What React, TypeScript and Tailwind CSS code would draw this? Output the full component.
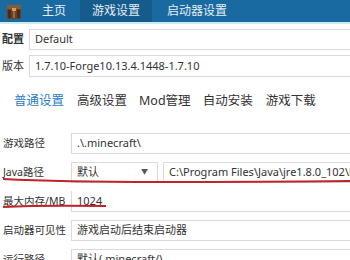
const font = { fontFamily: '"Noto Sans", "Noto Sans CJK SC", sans-serif' };

function BoxIcon() {
  return (
    <svg width="14" height="15" viewBox="0 0 14 15">
      <rect x="0" y="1" width="14" height="14" rx="1" fill="#6b4020" />
      <rect x="0" y="1" width="14" height="4" fill="#8a5a30" />
      <rect x="1" y="6" width="3" height="8" fill="#4a2a14" />
      <rect x="6" y="6" width="2" height="8" fill="#9a6838" />
      <rect x="10" y="6" width="3" height="8" fill="#4a2a14" />
      <rect x="5" y="4" width="4" height="3" fill="#c8a070" />
    </svg>
  );
}

function Field({ children, className = "" }: { children: React.ReactNode; className?: string }) {
  return (
    <div
      className={
        "h-[21px] border border-[#dadada] bg-white flex items-center px-[5px] text-[11px] text-[#333] whitespace-nowrap overflow-hidden " +
        className
      }
    >
      {children}
    </div>
  );
}

function Row({ label, children }: { label: string; children: React.ReactNode }) {
  return (
    <div className="flex items-center h-[21px]">
      <div className="w-[71px] pl-[3px] text-[10.5px] text-[#333] whitespace-nowrap">{label}</div>
      <div className="flex-1 flex gap-[5px] min-w-0">{children}</div>
    </div>
  );
}

export default function App() {
  return (
    <div className="w-[350px] h-[260px] bg-white overflow-hidden relative" style={font}>
      <div className="h-[22px] bg-[#1a6aa2] flex items-center text-[12px] text-[#e4eef6]">
        <div className="w-[28px] flex justify-center pl-[2px] pr-[3px]">
          <BoxIcon />
        </div>
        <div className="w-[52px] h-full flex items-center justify-center">主页</div>
        <div className="w-[72px] h-full flex items-center justify-center bg-[#155b8c]">游戏设置</div>
        <div className="h-full flex items-center pl-[15px]">启动器设置</div>
      </div>
      <div className="h-[2px] bg-[#c6eeee]" />

      <div className="pt-[5px] flex flex-col gap-[5px]">
        <div className="flex items-center">
          <div className="w-[29px] pl-[2px] text-[11px] font-bold text-[#333]">配置</div>
          <Field className="flex-1 border-r-0">Default</Field>
        </div>
        <div className="flex items-center">
          <div className="w-[29px] pl-[2px] text-[11px] text-[#333]">版本</div>
          <Field className="flex-1 border-r-0 h-[22px]">1.7.10-Forge10.13.4.1448-1.7.10</Field>
        </div>
      </div>

      <div className="mt-[12px] h-[24px] flex items-center pl-[14px] gap-[13px] text-[12.5px] text-[#333]">
        <span className="text-[#2c7cc4]">普通设置</span>
        <span>高级设置</span>
        <span className="-ml-[1px]">Mod管理</span>
        <span className="-ml-[1px]">自动安装</span>
        <span>游戏下载</span>
      </div>

      <div className="mt-[20px] flex flex-col gap-[8px]">
        <Row label="游戏路径">
          <Field className="flex-1 border-r-0">.\.minecraft\</Field>
        </Row>
        <Row label="Java路径">
          <Field className="w-[87px] shrink-0 justify-between">
            <span>默认</span>
            <span className="text-[7px] text-[#555] pr-[4px]">▼</span>
          </Field>
          <Field className="flex-1 border-r-0">C:\Program Files\Java\jre1.8.0_102\bin\javaw.exe</Field>
        </Row>
        <Row label="最大内存/MB">
          <Field className="flex-1 border-r-0 border-t-0">1024</Field>
        </Row>
        <Row label="启动器可见性">
          <Field className="flex-1 border-r-0">游戏启动后结束启动器</Field>
        </Row>
        <Row label="运行路径">
          <Field className="flex-1 border-r-0">默认(.minecraft/)</Field>
        </Row>
      </div>

      <svg className="absolute left-0 top-0 pointer-events-none" width="350" height="260">
        <path d="M3 179 Q 60 182 160 182 T 350 181" stroke="#c0232b" strokeWidth="2" fill="none" />
        <path d="M3 207 Q 40 205 106 206" stroke="#c0232b" strokeWidth="2" fill="none" />
      </svg>
    </div>
  );
}
